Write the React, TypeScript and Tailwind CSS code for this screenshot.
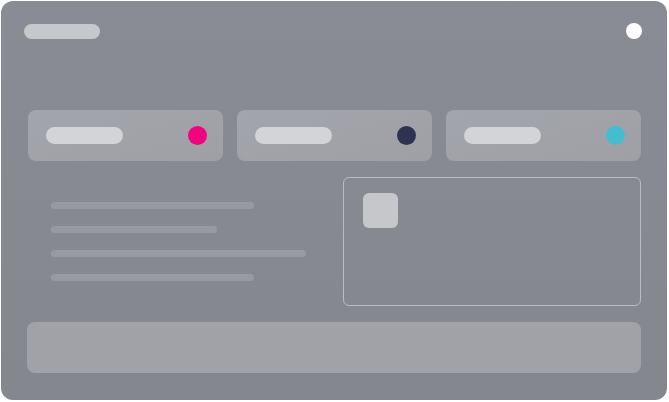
const cards = [
  { dot: 'bg-[#f0047f]' },
  { dot: 'bg-[#2f3352]' },
  { dot: 'bg-[#45bdd0]' },
]

const lines = ['w-[203px]', 'w-[166px]', 'w-[255px]', 'w-[203px]']

export default function App() {
  return (
    <div className="w-[669px] h-[402px] bg-white p-px">
      <div className="w-[666px] h-[399px] rounded-[12px] bg-gradient-to-b from-[#8a8c95] to-[#85878f] flex flex-col">
        {/* Top bar */}
        <div className="mt-[22px] h-4 pl-[23px] pr-[25px] flex items-center justify-between">
          <div className="w-[76px] h-[15px] rounded-full bg-[#c7c8cc]" />
          <div className="w-4 h-4 rounded-full bg-white" />
        </div>

        {/* Stat cards */}
        <div className="mt-[71px] ml-[27px] mr-[26px] grid grid-cols-3 gap-[14px]">
          {cards.map((c, i) => (
            <div
              key={i}
              className="h-[51px] rounded-[8px] bg-gradient-to-br from-[#a2a5ac] to-[#9fa0a5] pl-[18px] pr-4 flex items-center justify-between"
            >
              <div className="w-[77px] h-[17px] rounded-full bg-[#d3d4d8]" />
              <div className={`w-[19px] h-[19px] rounded-full ${c.dot}`} />
            </div>
          ))}
        </div>

        {/* Middle */}
        <div className="mt-4 mx-[26px] flex gap-[14px]">
          <div className="flex-1 pl-6 pt-[25px] flex flex-col gap-[17px]">
            {lines.map((w, i) => (
              <div key={i} className={`${w} h-[7px] rounded-full bg-[#969aa3]`} />
            ))}
          </div>
          <div className="w-[298px] h-[129px] rounded-[6px] border border-[#babcc2] pl-[19px] pt-[15px]">
            <div className="w-[35px] h-[35px] rounded-[6px] bg-[#c6c7cb]" />
          </div>
        </div>

        {/* Bottom bar */}
        <div className="mt-4 mx-[26px] h-[51px] rounded-[8px] bg-[#a1a2a7]" />
      </div>
    </div>
  )
}
